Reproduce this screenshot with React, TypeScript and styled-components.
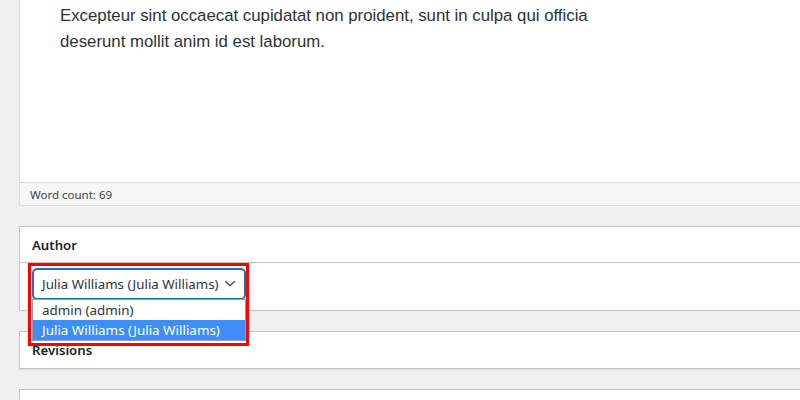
import React from "react";
import styled, { createGlobalStyle } from "styled-components";

const Global = createGlobalStyle`
  html, body { margin: 0; padding: 0; background: #f0f0f1; }
  body { font-family: "Noto Sans", "Open Sans", sans-serif; color: #3c434a; }
  * { box-sizing: border-box; }
`;

const Page = styled.div`
  width: 800px;
  height: 400px;
  overflow: hidden;
  padding-left: 19px;
`;

const Column = styled.div`
  display: flex;
  flex-direction: column;
  width: 800px;
`;

const EditorBox = styled.div`
  background: #fff;
  border-left: 1px solid #dcdcde;
  border-bottom: 1px solid #dcdcde;
`;

const EditorContent = styled.div`
  height: 182px;
  padding: 3px 0 0 40px;
`;

const Paragraph = styled.p`
  margin: 0;
  width: 545px;
  font-family: "Liberation Sans", sans-serif;
  font-size: 16.8px;
  line-height: 26px;
  color: #2c3338;
`;

const StatusBar = styled.div`
  height: 23px;
  border-top: 1px solid #dcdcde;
  background: #f6f7f7;
  padding-left: 10px;
  display: flex;
  align-items: center;
  font-size: 11.5px;
  color: #3c434a;
`;

const Postbox = styled.div<{ $gap: number; $shadow?: boolean }>`
  margin-top: ${(p) => p.$gap}px;
  background: #fff;
  border: 1px solid #c3c4c7;
  border-right: none;
  ${(p) => (p.$shadow ? "box-shadow: 0 1px 1px rgba(0,0,0,0.08);" : "")}
`;

const PostboxHeader = styled.div<{ $divider?: boolean }>`
  height: 36px;
  display: flex;
  align-items: center;
  padding-left: 12px;
  font-size: 13.2px;
  font-weight: 600;
  color: #1d2327;
  ${(p) => (p.$divider ? "border-bottom: 1px solid #c3c4c7;" : "")}
`;

const PostboxInside = styled.div`
  padding: 6px 12px 11px 13px;
`;

const SelectWrap = styled.div`
  position: relative;
  width: 212px;
  z-index: 2;
`;

const SelectBox = styled.div`
  height: 30px;
  border: 1px solid #2271b1;
  border-radius: 4px;
  box-shadow: 0 0 0 1px #2271b1;
  background: #fff;
  display: flex;
  align-items: center;
  justify-content: space-between;
  padding: 0 8px 0 8px;
  font-size: 13.3px;
  white-space: nowrap;
  color: #2c3338;
`;

const Listbox = styled.div`
  position: absolute;
  top: 30px;
  left: -1px;
  width: 214px;
  background: #fff;
  border: 1px solid #8c9fb3;
  display: flex;
  flex-direction: column;
`;

const Option = styled.div<{ $selected?: boolean }>`
  height: 20px;
  display: flex;
  align-items: center;
  padding-left: 9px;
  font-size: 13.4px;
  white-space: nowrap;
  color: ${(p) => (p.$selected ? "#fff" : "#2c3338")};
  background: ${(p) => (p.$selected ? "#3e8ef7" : "#fff")};
`;

const Highlight = styled.div`
  position: absolute;
  top: -6px;
  left: -5px;
  width: 221px;
  height: 83px;
  border: 3px solid #ff0000;
  pointer-events: none;
`;

const NextBox = styled(Postbox)`
  height: 40px;
`;

const Chevron = () => (
  <svg width="12" height="8" viewBox="0 0 12 8" fill="none">
    <path d="M1.5 1.5 L6 5.8 L10.5 1.5" stroke="#50575e" strokeWidth="1.4" strokeLinecap="round" strokeLinejoin="round" />
  </svg>
);

export default function App() {
  return (
    <Page>
      <Global />
      <Column>
        <EditorBox>
          <EditorContent>
            <Paragraph>
              Excepteur sint occaecat cupidatat non proident, sunt in culpa qui officia deserunt mollit anim id est laborum.
            </Paragraph>
          </EditorContent>
          <StatusBar>Word count: 69</StatusBar>
        </EditorBox>

        <Postbox $gap={20}>
          <PostboxHeader $divider>Author</PostboxHeader>
          <PostboxInside>
            <SelectWrap>
              <SelectBox>
                <span>Julia Williams (Julia Williams)</span>
                <Chevron />
              </SelectBox>
              <Listbox>
                <Option>admin (admin)</Option>
                <Option $selected>Julia Williams (Julia Williams)</Option>
              </Listbox>
              <Highlight />
            </SelectWrap>
          </PostboxInside>
        </Postbox>

        <Postbox $gap={20} $shadow>
          <PostboxHeader>Revisions</PostboxHeader>
        </Postbox>

        <NextBox $gap={20} />
      </Column>
    </Page>
  );
}
